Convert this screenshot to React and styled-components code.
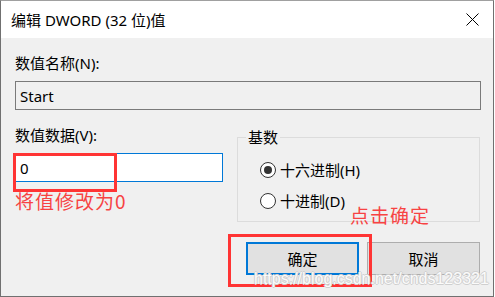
import styled, { createGlobalStyle } from "styled-components";

const GlobalStyle = createGlobalStyle`
  html, body {
    margin: 0;
    padding: 0;
    background: #ffffff;
    overflow: hidden;
  }
  * {
    box-sizing: border-box;
  }
`;

const uiFont = `"Noto Sans", "Noto Sans CJK SC", sans-serif`;

const Window = styled.div`
  position: relative;
  width: 494px;
  height: 297px;
  display: flex;
  flex-direction: column;
  background: #f0f0f0;
  border: 1px solid #707070;
  border-top-color: #a0a0a0;
  font-family: ${uiFont};
  font-size: 15px;
  color: #000;
`;

const TitleBar = styled.div`
  height: 37px;
  flex: none;
  display: flex;
  align-items: center;
  justify-content: space-between;
  padding: 0 14px 0 10px;
  background: #ffffff;
  line-height: 20px;
`;

const Body = styled.div`
  display: flex;
  flex-direction: column;
  padding: 15px 12px 0 14px;
`;

const Label = styled.div`
  line-height: 20px;
  height: 20px;
  white-space: nowrap;
`;

const Field = styled.div`
  margin-top: 8px;
  height: 29px;
  display: flex;
  align-items: center;
  padding-left: 4px;
  border: 1px solid ${(p) => (p.$focused ? "#0078d7" : "#7a7a7a")};
  background: ${(p) => (p.$focused ? "#ffffff" : "#f0f0f0")};
`;

const DataRow = styled.div`
  margin-top: 15px;
  display: grid;
  grid-template-columns: 208px 1fr;
  column-gap: 14px;
  align-items: start;
`;

const FieldWrap = styled.div`
  position: relative;
`;

const Annotation = styled.div`
  position: absolute;
  left: ${(p) => p.$left}px;
  top: ${(p) => p.$top}px;
  width: ${(p) => p.$w}px;
  height: ${(p) => p.$h}px;
  border: 3px solid #ff3434;
  pointer-events: none;
`;

const Hint = styled.div`
  margin-top: 7px;
  line-height: 24px;
  font-size: 19px;
  letter-spacing: 1px;
  color: #f74343;
  font-family: "Noto Sans CJK SC", sans-serif;
  white-space: nowrap;
`;

const FloatHint = styled(Hint)`
  position: absolute;
  left: 349px;
  top: 202px;
  margin: 0;
`;

const GroupBox = styled.fieldset`
  margin: 2px 1px 0 0;
  padding: 7px 0 0 22px;
  height: 95px;
  border: 1px solid #dcdcdc;
  min-width: 0;

  legend {
    padding: 0 2px;
    margin-left: -14px;
    line-height: 20px;
  }
`;

const RadioRow = styled.div`
  height: 31px;
  display: flex;
  align-items: center;
  gap: 4px;
  white-space: nowrap;
`;

const RadioDot = styled.span`
  position: relative;
  width: 16px;
  height: 16px;
  flex: none;
  border-radius: 50%;
  border: 1px solid #333;
  background: #fff;

  &::after {
    content: "";
    display: ${(p) => (p.$checked ? "block" : "none")};
    position: absolute;
    left: 3px;
    top: 3px;
    width: 8px;
    height: 8px;
    border-radius: 50%;
    background: #333;
  }
`;

const ButtonRow = styled.div`
  margin-top: 20px;
  margin-right: 1px;
  display: flex;
  justify-content: flex-end;
  gap: 8px;
`;

const ButtonWrap = styled.div`
  position: relative;
`;

const Button = styled.button`
  width: 113px;
  height: 33px;
  margin: 0;
  padding: 0;
  font-family: ${uiFont};
  font-size: 15px;
  color: #000;
  background: #e1e1e1;
  border: ${(p) => (p.$default ? "2px solid #0078d7" : "1px solid #adadad")};
  border-radius: 0;
`;

const Watermark = styled.div`
  position: absolute;
  left: 253px;
  top: 268px;
  font-family: "Liberation Sans", Arial, sans-serif;
  font-size: 16px;
  line-height: 20px;
  color: #fbfbfb;
  text-shadow: 1px 0 #cfcfcf, -1px 0 #cfcfcf, 0 1px #cfcfcf, 0 -1px #cfcfcf;
  pointer-events: none;
  white-space: nowrap;
`;

function Radio({ checked, label }) {
  return (
    <RadioRow>
      <RadioDot $checked={checked} />
      {label}
    </RadioRow>
  );
}

export default function App() {
  return (
    <>
      <GlobalStyle />
      <Window>
        <TitleBar>
          <span>编辑 DWORD (32 位)值</span>
          <svg width="13" height="13" viewBox="0 0 13 13">
            <path d="M0.5 0.5 L12.5 12.5 M12.5 0.5 L0.5 12.5" stroke="#000" strokeWidth="1" fill="none" />
          </svg>
        </TitleBar>
        <Body>
          <Label>数值名称(N):</Label>
          <Field>Start</Field>
          <DataRow>
            <div>
              <Label>数值数据(V):</Label>
              <FieldWrap>
                <Field $focused>0</Field>
                <Annotation $left={-2} $top={0} $w={104} $h={39} />
              </FieldWrap>
              <Hint>将值修改为0</Hint>
            </div>
            <GroupBox>
              <legend>基数</legend>
              <Radio checked label="十六进制(H)" />
              <Radio label="十进制(D)" />
            </GroupBox>
          </DataRow>
          <ButtonRow>
            <ButtonWrap>
              <Button $default>确定</Button>
              <Annotation $left={-18} $top={-8} $w={144} $h={53} />
            </ButtonWrap>
            <Button>取消</Button>
          </ButtonRow>
        </Body>
        <FloatHint>点击确定</FloatHint>
        <Watermark>https://blog.csdn.net/cnds123321</Watermark>
      </Window>
    </>
  );
}
